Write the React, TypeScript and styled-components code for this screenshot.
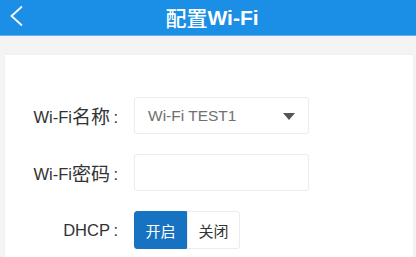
import React from "react";
import styled, { createGlobalStyle } from "styled-components";

const GlobalStyle = createGlobalStyle`
    html, body {
        margin: 0;
        padding: 0;
        background: #f4f4f4;
        font-family: "Liberation Sans", "Noto Sans CJK SC", sans-serif;
    }
`;

const Page = styled.div`
    width: 416px;
    height: 257px;
    overflow: hidden;
    display: flex;
    flex-direction: column;
`;

const Header = styled.header`
    height: 35px;
    flex-shrink: 0;
    background: #1b8fe5;
    border-bottom: 1px solid #62b1ee;
    display: flex;
    align-items: center;
    justify-content: center;
    position: relative;
`;

const Back = styled.button`
    position: absolute;
    left: 9px;
    top: 5px;
    width: 16px;
    height: 22px;
    padding: 0;
    border: 0;
    background: none;
    display: flex;
`;

const Title = styled.h1`
    margin: 0 0 0 8px;
    color: #fff;
    font-size: 21px;
    font-weight: bold;
    line-height: 1;
`;

const Card = styled.section`
    flex: 1;
    margin: 19px 3px 0 5px;
    padding-top: 42px;
    background: #fff;
    box-shadow: 0 0 2px rgba(0, 0, 0, 0.06);
    display: flex;
    flex-direction: column;
    gap: 20px;
`;

const Row = styled.div`
    display: grid;
    grid-template-columns: 113px 175px;
    column-gap: 16px;
    align-items: center;
    height: 37px;
`;

const Label = styled.label`
    text-align: right;
    color: #333;
    font-size: 16.5px;
    white-space: nowrap;
`;

const Han = styled.span<{ $size?: number; $weight?: number }>`
    font-family: "Noto Sans CJK SC", sans-serif;
    font-size: ${(p) => p.$size ?? 19}px;
    font-weight: ${(p) => p.$weight ?? 400};
    vertical-align: -1px;
`;

const Colon = styled.span`
    margin-left: 3.5px;
`;

const Field = styled.div`
    box-sizing: border-box;
    height: 37px;
    border: 1px solid #ececec;
    border-radius: 3px;
    display: flex;
    align-items: center;
    justify-content: space-between;
    padding: 0 13px 0 13px;
    color: #707070;
    font-size: 15.5px;
`;

const Caret = styled.span`
    width: 0;
    height: 0;
    border-left: 6.5px solid transparent;
    border-right: 6.5px solid transparent;
    border-top: 7px solid #555;
    margin-top: 1px;
`;

const Toggle = styled.div`
    display: flex;
    height: 38px;
`;

const ToggleButton = styled.button<{ $active?: boolean }>`
    width: 53px;
    height: 38px;
    padding: 0;
    border: 1px solid ${(p) => (p.$active ? "#1773c1" : "#ececec")};
    border-radius: ${(p) => (p.$active ? "3px 0 0 3px" : "0 3px 3px 0")};
    background: ${(p) => (p.$active ? "#1773c1" : "#fff")};
    color: ${(p) => (p.$active ? "#fff" : "#333")};
    font-family: "Noto Sans CJK SC", sans-serif;
    font-size: 15px;
`;

function App() {
    return (
        <Page>
            <GlobalStyle />
            <Header>
                <Back aria-label="返回">
                    <svg width="16" height="22" viewBox="0 0 16 22">
                        <polyline points="13,1.5 2.5,11 13,20.5" fill="none" stroke="#fff" strokeWidth="1.8" />
                    </svg>
                </Back>
                <Title>
                    <Han $size={21} $weight={500}>配置</Han>Wi-Fi
                </Title>
            </Header>
            <Card>
                <Row>
                    <Label>
                        Wi-Fi<Han>名称</Han>
                        <Colon>:</Colon>
                    </Label>
                    <Field>
                        Wi-Fi TEST1
                        <Caret />
                    </Field>
                </Row>
                <Row>
                    <Label>
                        Wi-Fi<Han>密码</Han>
                        <Colon>:</Colon>
                    </Label>
                    <Field />
                </Row>
                <Row>
                    <Label>
                        DHCP<Colon>:</Colon>
                    </Label>
                    <Toggle>
                        <ToggleButton $active>开启</ToggleButton>
                        <ToggleButton>关闭</ToggleButton>
                    </Toggle>
                </Row>
            </Card>
        </Page>
    );
}

export default App;
